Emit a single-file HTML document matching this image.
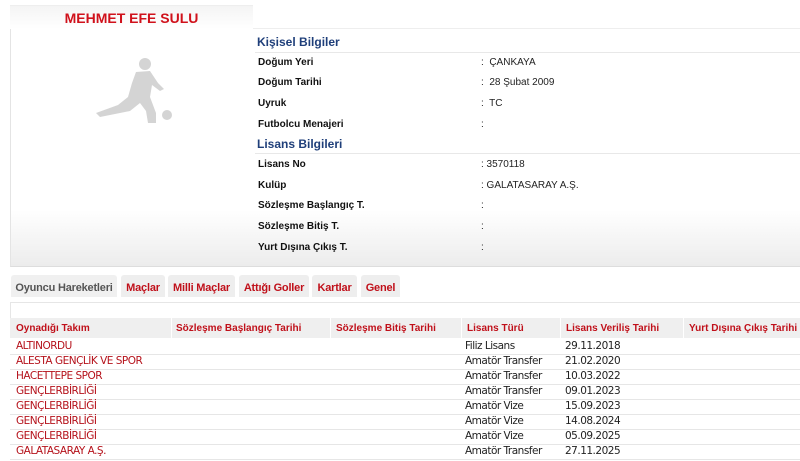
<!DOCTYPE html><html><head><meta charset="utf-8"><style>
body{margin:0;width:800px;height:461px;background:#fff;font-family:"Liberation Sans",sans-serif;position:relative;overflow:hidden}
.a{position:absolute;white-space:nowrap}
.panel{left:10px;top:5px;width:790px;height:261px;background:linear-gradient(#fff 0,#fff 205px,#ececec 261px);border-left:1px solid #e4e4e4;border-bottom:1px solid #ddd}
.name{left:10px;top:5px;width:243px;height:23px;background:linear-gradient(#f4f4f4,#fff);color:#d0111b;font-weight:bold;font-size:14px;text-align:center;line-height:24px;border-top:1px solid #eee}
.lbl{left:258px;font-size:10px;font-weight:bold;color:#111}
.col{left:481px;font-size:10px;color:#222}
.sec{left:257px;font-size:12px;font-weight:bold;color:#1f3f7a}
.hl{left:255px;width:545px;height:1px;background:#e8e8e8}
.tab{top:275px;height:22px;background:#eee;border-radius:3px 3px 0 0;color:#c0101a;font-weight:bold;font-size:11px;line-height:26px;text-align:center;letter-spacing:-0.2px}
.row{left:10px;width:790px;height:15px;border-bottom:1px solid #e6e6e6;font-size:10.5px;color:#222;font-family:"DejaVu Sans",sans-serif;letter-spacing:-0.5px}
.row span{position:absolute;top:1px}
.red{color:#b5121b}
.th{left:10px;top:318px;width:790px;height:20px;background:#efefef;font-size:10px;font-weight:bold;color:#c0101a}
.th span{position:absolute;top:5px}
</style></head><body>
<div class="a panel"></div>
<div class="a name">MEHMET EFE SULU</div>
<div class="a" style="left:253px;top:28px;width:547px;height:1px;background:#eee"></div>
<svg class="a" style="left:90px;top:55px" width="90" height="75" viewBox="0 0 90 75"><g fill="#d4d4d4"><circle cx="55" cy="9" r="6"/><path d="M46 17 L60 16 L68 28 L74 34 L70 36 L62 30 L60 42 L66 58 L66 68 L58 68 L56 56 L50 48 L40 56 L30 58 L10 62 L6 58 L28 50 L38 42 L42 28 Z"/><circle cx="77" cy="60" r="5"/></g></svg>
<div class="a sec" style="top:35px">Kişisel Bilgiler</div>
<div class="a hl" style="top:52px"></div>
<div class="a lbl" style="top:57px">Doğum Yeri</div><div class="a col" style="top:57px">:&nbsp; ÇANKAYA</div>
<div class="a lbl" style="top:77px">Doğum Tarihi</div><div class="a col" style="top:77px">:&nbsp; 28 Şubat 2009</div>
<div class="a lbl" style="top:98px">Uyruk</div><div class="a col" style="top:98px">:&nbsp; TC</div>
<div class="a lbl" style="top:119px">Futbolcu Menajeri</div><div class="a col" style="top:119px">:</div>
<div class="a sec" style="top:137px">Lisans Bilgileri</div>
<div class="a hl" style="top:153px"></div>
<div class="a lbl" style="top:159px">Lisans No</div><div class="a col" style="top:159px">: 3570118</div>
<div class="a lbl" style="top:180px">Kulüp</div><div class="a col" style="top:180px">: GALATASARAY A.Ş.</div>
<div class="a lbl" style="top:200px">Sözleşme Başlangıç T.</div><div class="a col" style="top:200px">:</div>
<div class="a lbl" style="top:221px">Sözleşme Bitiş T.</div><div class="a col" style="top:221px">:</div>
<div class="a lbl" style="top:242px">Yurt Dışına Çıkış T.</div><div class="a col" style="top:242px">:</div>

<div class="a tab" style="left:11px;width:106px;color:#555;background:#f0f0f0">Oyuncu Hareketleri</div>
<div class="a tab" style="left:121px;width:44px">Maçlar</div>
<div class="a tab" style="left:168px;width:67px">Milli Maçlar</div>
<div class="a tab" style="left:239px;width:70px">Attığı Goller</div>
<div class="a tab" style="left:312px;width:45px">Kartlar</div>
<div class="a tab" style="left:361px;width:39px">Genel</div>
<div class="a" style="left:10px;top:302px;width:790px;height:15px;border:1px solid #e6e6e6;border-right:none"></div>
<div class="a th"><span style="left:6px">Oynadığı Takım</span><span style="left:166px">Sözleşme Başlangıç Tarihi</span><span style="left:326px">Sözleşme Bitiş Tarihi</span><span style="left:457px">Lisans Türü</span><span style="left:556px">Lisans Veriliş Tarihi</span><span style="left:679px">Yurt Dışına Çıkış Tarihi</span>
<div class="a" style="left:161px;top:0;width:1px;height:20px;background:#fff"></div><div class="a" style="left:320px;top:0;width:1px;height:20px;background:#fff"></div><div class="a" style="left:451px;top:0;width:1px;height:20px;background:#fff"></div><div class="a" style="left:550px;top:0;width:1px;height:20px;background:#fff"></div><div class="a" style="left:673px;top:0;width:1px;height:20px;background:#fff"></div></div>
<div class="a row" style="top:339px"><span class="red" style="left:6px">ALTINORDU</span><span style="left:455px">Filiz Lisans</span><span style="left:555px">29.11.2018</span></div>
<div class="a row" style="top:354px"><span class="red" style="left:6px">ALESTA GENÇLİK VE SPOR</span><span style="left:455px">Amatör Transfer</span><span style="left:555px">21.02.2020</span></div>
<div class="a row" style="top:369px"><span class="red" style="left:6px">HACETTEPE SPOR</span><span style="left:455px">Amatör Transfer</span><span style="left:555px">10.03.2022</span></div>
<div class="a row" style="top:384px"><span class="red" style="left:6px">GENÇLERBİRLİĞİ</span><span style="left:455px">Amatör Transfer</span><span style="left:555px">09.01.2023</span></div>
<div class="a row" style="top:399px"><span class="red" style="left:6px">GENÇLERBİRLİĞİ</span><span style="left:455px">Amatör Vize</span><span style="left:555px">15.09.2023</span></div>
<div class="a row" style="top:414px"><span class="red" style="left:6px">GENÇLERBİRLİĞİ</span><span style="left:455px">Amatör Vize</span><span style="left:555px">14.08.2024</span></div>
<div class="a row" style="top:429px"><span class="red" style="left:6px">GENÇLERBİRLİĞİ</span><span style="left:455px">Amatör Vize</span><span style="left:555px">05.09.2025</span></div>
<div class="a row" style="top:444px"><span class="red" style="left:6px">GALATASARAY A.Ş.</span><span style="left:455px">Amatör Transfer</span><span style="left:555px">27.11.2025</span></div>
</body></html>
